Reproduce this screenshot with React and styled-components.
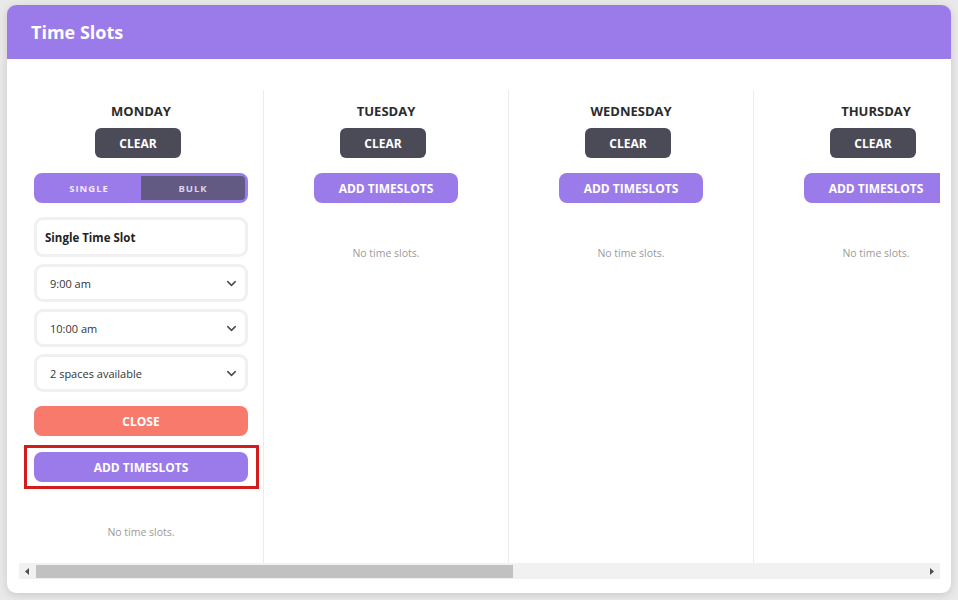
import React from "react";
import styled, { createGlobalStyle, css } from "styled-components";

const DAYS = ["Monday", "Tuesday", "Wednesday", "Thursday", "Friday", "Saturday", "Sunday"];
const COLUMN_WIDTH = 245;
const VIEW_WIDTH = 921;

const GlobalStyle = createGlobalStyle`
  * { box-sizing: border-box; }
  html, body {
    margin: 0;
    background: #e9e9e9;
    font-family: "Open Sans", "Liberation Sans", sans-serif;
  }
`;

const Page = styled.div`
  padding: 5px 7px 7px 7px;
`;

const Card = styled.div`
  background: #fff;
  border-radius: 9px;
  overflow: hidden;
  box-shadow: 0 2px 8px rgba(0, 0, 0, 0.14);
`;

const Header = styled.div`
  height: 54px;
  display: flex;
  align-items: center;
  padding: 0 24px;
  background: #9b7aea;
`;

const Title = styled.h1`
  margin: 0;
  color: #fff;
  font-size: 18px;
  font-weight: 700;
`;

const Body = styled.div`
  padding: 31px 11px 14px 12px;
`;

const Scroller = styled.div`
  display: flex;
  overflow: hidden;
`;

const ScrollBar = styled.div`
  display: flex;
  height: 16px;
  background: #f1f1f1;
`;

const ScrollArrow = styled.div`
  flex: 0 0 16px;
  display: flex;
  align-items: center;
  justify-content: center;
`;

const ScrollTrack = styled.div`
  flex: 1;
  padding: 2px 0 1px 1px;
`;

const ScrollThumb = styled.div`
  height: 100%;
  background: #c1c1c1;
`;

const Column = styled.div`
  flex: 0 0 ${COLUMN_WIDTH}px;
  display: flex;
  flex-direction: column;
  align-items: center;
  padding: 11px 15px 24px;
  border-right: 1px solid #ececec;
`;

const DayName = styled.div`
  font-size: 13px;
  font-weight: 700;
  color: #2b2b2b;
  text-transform: uppercase;
  line-height: 20px;
  margin-bottom: 7px;
`;

const buttonBase = css`
  border: none;
  height: 30px;
  color: #fff;
  font-family: inherit;
  font-size: 12px;
  font-weight: 700;
  text-transform: uppercase;
  cursor: pointer;
  flex-shrink: 0;
`;

const ClearButton = styled.button`
  ${buttonBase};
  width: 86px;
  border-radius: 6px;
  background: #4b4b57;
  margin: 0 6px 15px 0;
`;

const AddButton = styled.button`
  ${buttonBase};
  border-radius: 8px;
  background: #9b7aea;
  width: ${(p) => (p.$full ? "100%" : "144px")};
`;

const Highlight = styled.div`
  align-self: stretch;
  margin: 0 -11px -7px -10px;
  padding: 4px 8px 4px 7px;
  border: 3px solid #d11d1d;
  display: flex;
`;

const CloseButton = styled.button`
  ${buttonBase};
  width: 100%;
  border-radius: 8px;
  background: #f87a6d;
  margin: 7px 0 9px;
`;

const Toggle = styled.div`
  width: 100%;
  height: 30px;
  display: grid;
  grid-template-columns: 1fr 1fr;
  border: 3px solid #9b7aea;
  border-radius: 8px;
  background: #9b7aea;
  margin-bottom: 14px;
`;

const ToggleOption = styled.div`
  display: flex;
  align-items: center;
  justify-content: center;
  font-size: 9.5px;
  font-weight: 700;
  letter-spacing: 1px;
  text-transform: uppercase;
  border-radius: 0 4px 4px 0;
  background: ${(p) => (p.$active ? "#625a82" : "transparent")};
  color: ${(p) => (p.$active ? "#d9d3ea" : "#efeafc")};
`;

const Field = styled.div`
  width: 100%;
  flex-shrink: 0;
  display: flex;
  align-items: center;
  justify-content: space-between;
  border: 3px solid #f0f0f0;
  border-radius: 9px;
  color: #333;
  margin-bottom: 7px;
`;

const SlotTitle = styled(Field)`
  height: 40px;
  padding: 0 8px;
  font-size: 11.5px;
  font-weight: 700;
  color: #222;
`;

const Select = styled(Field)`
  height: 38px;
  padding: 0 6px 0 13px;
  font-size: 11px;
`;

const Empty = styled.div`
  margin-top: 43px;
  font-size: 10.5px;
  color: #9a9a9a;
`;

function Chevron() {
  return (
    <svg width="15" height="15" viewBox="0 0 24 24" fill="none" stroke="#4a4a4a" strokeWidth="2.3" strokeLinecap="round" strokeLinejoin="round">
      <path d="M6 9l6 6 6-6" />
    </svg>
  );
}

function Arrow({ dir }) {
  return (
    <svg width="4" height="7" viewBox="0 0 4 7">
      <path d={dir === "left" ? "M4 0L0 3.5L4 7Z" : "M0 0L4 3.5L0 7Z"} fill="#505050" />
    </svg>
  );
}

function SingleForm() {
  return (
    <>
      <Toggle>
        <ToggleOption>Single</ToggleOption>
        <ToggleOption $active>Bulk</ToggleOption>
      </Toggle>
      <SlotTitle>Single Time Slot</SlotTitle>
      <Select>
        <span>9:00 am</span>
        <Chevron />
      </Select>
      <Select>
        <span>10:00 am</span>
        <Chevron />
      </Select>
      <Select>
        <span>2 spaces available</span>
        <Chevron />
      </Select>
      <CloseButton>Close</CloseButton>
      <Highlight>
        <AddButton $full>Add Timeslots</AddButton>
      </Highlight>
    </>
  );
}

function DayColumn({ day, editing }) {
  return (
    <Column>
      <DayName>{day}</DayName>
      <ClearButton>Clear</ClearButton>
      {editing ? <SingleForm /> : <AddButton>Add Timeslots</AddButton>}
      <Empty>No time slots.</Empty>
    </Column>
  );
}

export default function App() {
  const thumb = (VIEW_WIDTH / (COLUMN_WIDTH * DAYS.length)) * 100;
  return (
    <>
      <GlobalStyle />
      <Page>
        <Card>
          <Header>
            <Title>Time Slots</Title>
          </Header>
          <Body>
            <Scroller>
              {DAYS.map((d, i) => (
                <DayColumn key={d} day={d} editing={i === 0} />
              ))}
            </Scroller>
            <ScrollBar>
              <ScrollArrow>
                <Arrow dir="left" />
              </ScrollArrow>
              <ScrollTrack>
                <ScrollThumb style={{ width: `${thumb}%` }} />
              </ScrollTrack>
              <ScrollArrow>
                <Arrow dir="right" />
              </ScrollArrow>
            </ScrollBar>
          </Body>
        </Card>
      </Page>
    </>
  );
}
